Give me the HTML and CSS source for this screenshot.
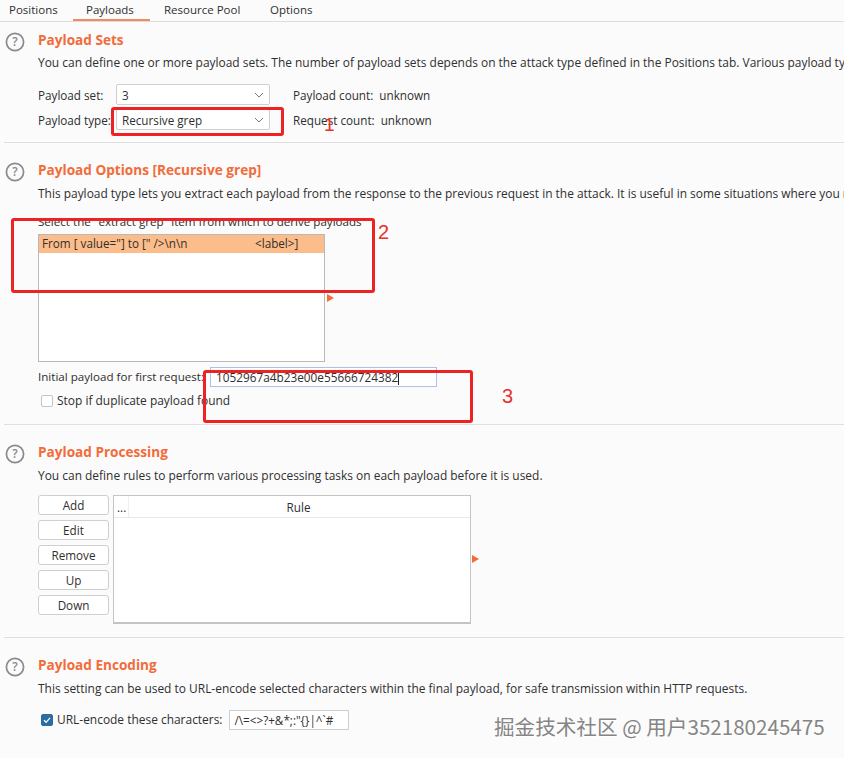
FILE: index.html
```html
<!DOCTYPE html>
<html lang="en">
<head>
<meta charset="utf-8">
<title>Payloads</title>
<link rel="stylesheet" href="styles.css">
</head>
<body>
<div class="page">
  <nav class="tabs">
    <span class="tab">Positions</span>
    <span class="tab active">Payloads</span>
    <span class="tab">Resource Pool</span>
    <span class="tab">Options</span>
  </nav>

  <section class="section s1">
    <svg class="help" viewBox="0 0 20 20"><circle cx="10" cy="10" r="8.6"/><text x="10" y="14.2" text-anchor="middle">?</text></svg>
    <div class="body">
      <h2>Payload Sets</h2>
      <p class="desc">You can define one or more payload sets. The number of payload sets depends on the attack type defined in the Positions tab. Various payload types are available for each payload set, and each payload type can be customized in different ways.</p>
      <div class="row r1">
        <span class="lbl">Payload set:</span>
        <div class="select"><span>3</span><svg viewBox="0 0 10 6"><path d="M1 1l4 4 4-4"/></svg></div>
        <span class="count">Payload count:&nbsp; unknown</span>
      </div>
      <div class="row r2">
        <span class="lbl">Payload type:</span>
        <div class="select"><span>Recursive grep</span><svg viewBox="0 0 10 6"><path d="M1 1l4 4 4-4"/></svg></div>
        <span class="count">Request count:&nbsp; unknown</span>
      </div>
    </div>
  </section>

  <section class="section s2">
    <svg class="help" viewBox="0 0 20 20"><circle cx="10" cy="10" r="8.6"/><text x="10" y="14.2" text-anchor="middle">?</text></svg>
    <div class="body">
      <h2>Payload Options [Recursive grep]</h2>
      <p class="desc">This payload type lets you extract each payload from the response to the previous request in the attack. It is useful in some situations where you need to work recursively to extract useful data or deliver an exploit.</p>
      <p class="hint">Select the "extract grep" item from which to derive payloads</p>
      <div class="listwrap">
        <div class="list">
          <div class="item"><span class="from">From [ value="] to [" /&gt;\n\n</span><span>&lt;label&gt;]</span></div>
        </div>
        <span class="arrow arrow-list"></span>
      </div>
      <div class="row r3">
        <span class="lbl">Initial payload for first request:</span>
        <div class="input">1052967a4b23e00e55666724382<i class="caret"></i></div>
      </div>
      <label class="check r4"><span class="box"></span>Stop if duplicate payload found</label>
    </div>
  </section>

  <section class="section s3">
    <svg class="help" viewBox="0 0 20 20"><circle cx="10" cy="10" r="8.6"/><text x="10" y="14.2" text-anchor="middle">?</text></svg>
    <div class="body">
      <h2>Payload Processing</h2>
      <p class="desc">You can define rules to perform various processing tasks on each payload before it is used.</p>
      <div class="rules">
        <div class="buttons">
          <button>Add</button><button>Edit</button><button>Remove</button><button>Up</button><button>Down</button>
        </div>
        <div class="table">
          <div class="thead"><span class="th-dots">...</span><span class="th-rule">Rule</span></div>
        </div>
        <span class="arrow arrow-table"></span>
      </div>
    </div>
  </section>

  <section class="section s4">
    <svg class="help" viewBox="0 0 20 20"><circle cx="10" cy="10" r="8.6"/><text x="10" y="14.2" text-anchor="middle">?</text></svg>
    <div class="body">
      <h2>Payload Encoding</h2>
      <p class="desc">This setting can be used to URL-encode selected characters within the final payload, for safe transmission within HTTP requests.</p>
      <div class="row r5">
        <span class="box checked"><svg viewBox="0 0 12 12"><path d="M2.4 6.2l2.5 2.6 4.8-5.4"/></svg></span>
        <span class="enc-label">URL-encode these characters:</span>
        <div class="chars">/\=&lt;&gt;?+&amp;*;:"{}|^`#</div>
      </div>
    </div>
  </section>

  <div class="mark mark1"></div><span class="num num1">1</span>
  <div class="mark mark2"></div><span class="num num2">2</span>
  <div class="mark mark3"></div><span class="num num3">3</span>
  <div class="watermark">掘金技术社区 @ 用户352180245475</div>
</div>
</body>
</html>
```
FILE: styles.css
```css
* { box-sizing: border-box; }
html, body { margin: 0; padding: 0; }
body { background: #fbfbfb; color: #2f2f2f; font: 11.7px/16px "Open Sans", "Noto Sans", sans-serif; }
.page { position: relative; width: 844px; height: 758px; overflow: hidden; }

.tabs { display: flex; height: 22px; border-bottom: 1px solid #dedede; font-size: 11.5px; }
.tab { padding: 2px 12px 0; line-height: 16px; height: 21px; }
.tab:first-child { padding-left: 9px; padding-right: 14px; width: 73px; }
.tab.active { width: 77px; padding: 2px 0 0 13px; border-bottom: 2px solid #ef8a62; }
.tab:nth-child(3) { width: 120px; padding-left: 14px; padding-right: 0; }
.tab:last-child { padding-left: 0; }

.section { display: flex; margin-left: 4px; border-bottom: 1px solid #dfdfdf; }
.s1 { height: 121px; }
.s2 { height: 282px; }
.s3 { height: 213px; }
.s4 { border-bottom: 0; height: 120px; }
.help { flex: none; width: 20px; height: 20px; margin: 19px 0 0 1px; }
.s1 .help { margin-top: 10px; }
.help circle { fill: none; stroke: #8a8a8a; stroke-width: 1.7; }
.help text { font: 600 12px "Open Sans", sans-serif; fill: #8a8a8a; }
.body { margin-left: 13px; min-width: 0; flex: 1; position: relative; }
h2 { margin: 18px 0 0; font-size: 13.6px; line-height: 17px; font-weight: 700; color: #f26b3a; white-space: nowrap; }
.s1 h2 { margin-top: 9px; }
.desc { margin: 8px 0 0; font-size: 11.95px; white-space: nowrap; }
.s1 .desc { margin-top: 7px; }
.hint { margin: 12px 0 0; font-size: 11.6px; white-space: nowrap; }

.row { display: flex; align-items: center; white-space: nowrap; }
.r1 { margin-top: 13px; height: 21px; }
.r2 { margin-top: 4px; height: 21px; }
.lbl { width: 78px; flex: none; }
.select { width: 154px; height: 21px; background: #fff; border: 1px solid #cfcfcf; border-radius: 2px; display: flex; align-items: center; justify-content: space-between; padding: 0 5px; flex: none; }
.select svg { width: 10px; height: 6px; fill: none; stroke: #777; stroke-width: 1; }
.count { margin-left: 23px; }

.listwrap { position: relative; margin-top: 4px; }
.list { width: 287px; height: 128px; background: #fff; border: 1px solid #b9b9b9; }
.item { display: flex; height: 18px; background: #fdbd8a; line-height: 17px; padding-left: 3px; white-space: nowrap; }
.from { width: 213px; }
.arrow { position: absolute; width: 0; height: 0; border-left: 7px solid #f26b3a; border-top: 4px solid transparent; border-bottom: 4px solid transparent; }
.arrow-list { left: 289px; top: 60px; }
.arrow-table { left: 434px; top: 60px; }

.r3 { margin-top: 5px; height: 20px; }
.r3 .lbl { width: 172px; font-size: 11.6px; }
.input { width: 227px; height: 20px; background: #fff; border: 1px solid #a9c4e4; padding-left: 5px; line-height: 18px; font-size: 11.8px; }
.caret { display: inline-block; width: 1px; height: 14px; background: #222; vertical-align: -3px; }
.check { display: flex; align-items: center; margin: 6px 0 0 3px; height: 16px; font-size: 11.95px; white-space: nowrap; }
.box { flex: none; width: 12px; height: 12px; border: 1px solid #c4c4c4; border-radius: 2px; background: #fff; margin-right: 4px; }

.rules { position: relative; display: flex; margin-top: 11px; }
.buttons { display: flex; flex-direction: column; gap: 5px; width: 71px; flex: none; }
button { height: 20px; padding: 0; font: inherit; color: inherit; background: #fff; border: 1px solid #cfcfcf; border-radius: 3px; }
.table { margin-left: 4px; width: 358px; height: 129px; background: #fff; border: 1px solid #c4c4c4; border-bottom-width: 2px; }
.thead { display: flex; height: 22px; border-bottom: 1px solid #e8e8e8; line-height: 22px; }
.th-dots { width: 15px; border-right: 1px solid #efefef; padding-left: 3px; }
.th-rule { flex: 1; text-align: center; padding-right: 2px; }

.r5 { margin-top: 13px; height: 20px; }
.r5 .box { margin: 0 4px 0 3px; }
.box.checked { background: #2b6ca3; border-color: #2b6ca3; display: flex; }
.box.checked svg { width: 100%; height: 100%; fill: none; stroke: #fff; stroke-width: 1.6; }
.enc-label { font-size: 11.95px; }
.chars { margin-left: 6px; width: 120px; height: 20px; background: #fff; border: 1px solid #cfcfcf; padding-left: 5px; line-height: 18px; white-space: nowrap; }

.mark { position: absolute; border: 3px solid #ee2222; border-radius: 3px; }
.mark1 { left: 111px; top: 107px; width: 173px; height: 29px; }
.mark2 { left: 11px; top: 218px; width: 364px; height: 75px; }
.mark3 { left: 203px; top: 370px; width: 270px; height: 53px; }
.num { position: absolute; color: #e8302a; font: 20px/24px "Liberation Sans", sans-serif; }
.num1 { left: 324px; top: 113px; font-size: 19px; }
.num2 { left: 378px; top: 220px; }
.num3 { left: 502px; top: 384px; }
.watermark { position: absolute; left: 494px; top: 713px; font: 20.6px/26px "Noto Sans CJK SC", "Noto Sans", sans-serif; color: #858585; white-space: nowrap; text-shadow: 0 1px 0 #fff; }
```
